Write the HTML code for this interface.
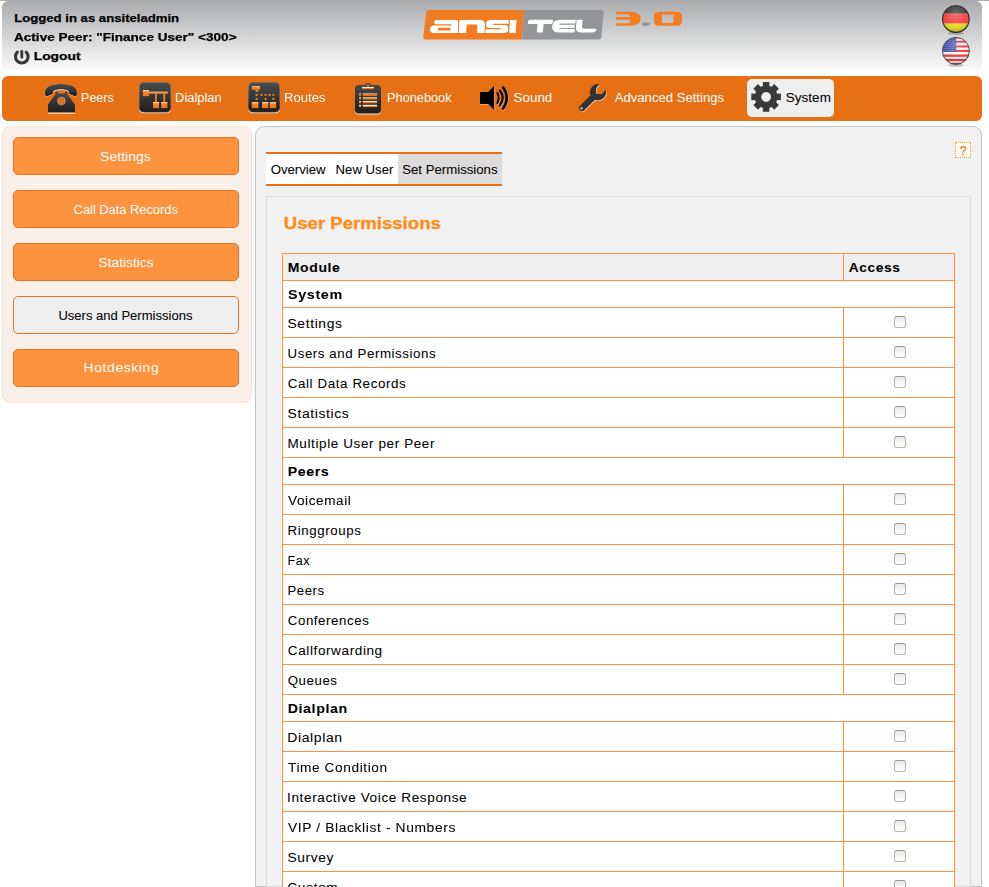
<!DOCTYPE html>
<html><head><meta charset="utf-8"><title>ansitel</title>
<style>
html,body{margin:0;padding:0;background:#fff;}
html{overflow:hidden;width:989px;height:887px;}
body{width:989px;height:887px;overflow:hidden;position:relative;font-family:"Liberation Sans",sans-serif;font-size:12.5px;color:#000;}
div,span,i,svg{position:absolute;box-sizing:border-box;display:block;}
span{white-space:nowrap;font-style:normal;}
.b{font-weight:bold;}
#topline{left:0;top:0;width:989px;height:1px;background:#a9aaac;}
#hdr{left:2px;top:0;width:980px;height:71px;border-radius:6px;background:linear-gradient(#a9aaac 0%,#fcfcfc 100%);clip-path:inset(1px 0 0 0 round 6px);}
#hdr span{font-weight:bold;font-size:11.5px;color:#000;line-height:14px;}
#nav{left:2px;top:76px;width:980px;height:45px;border-radius:6px;background:#e76f14;}
#nav span{color:#fff;font-size:12.5px;line-height:16px;top:14px;}
#sys{left:745px;top:3px;width:87px;height:38px;border-radius:5px;background:#eee;}
#side{left:2px;top:126px;width:250px;height:277px;border-radius:8px;background:#f9eee8;border:1px solid #f7e2d5;}
.sb{left:13px;width:226px;height:38px;border-radius:5px;border:1px solid #e9741f;background:#fd923f;}
.sb span{color:#fff;line-height:36px;top:1px;}
.sb.sel{background:#eeeeee;border-color:#e9741f;}
.sb.sel span{color:#000;}
#main{left:255px;top:126px;width:727px;height:761px;border-bottom:none;border:1px solid #c4c4c4;border-radius:9px 9px 0 0;background:#f1f1f1;}
#tabs{left:266px;top:152px;width:236px;height:34px;border-top:2px solid #e76f14;border-bottom:2px solid #e76f14;background:#fff;}
#tabs .sel{left:132px;top:0;width:104px;height:30px;background:#dddcdc;}
#tabs span{line-height:30px;top:1px;}
#help{left:955px;top:142px;width:16px;height:16px;border:1px dotted #ff9d00;background:#fcfcf6;}
#help span{color:#e5670e;font-size:13px;line-height:14px;left:3.5px;top:0.5px;}
#inner{left:266px;top:196px;width:705px;height:691px;border-bottom:none;border:1px solid #dadada;background:#f1f1f1;}
#title{left:284px;top:212.8px;font-size:16.5px;font-weight:bold;color:#ff8c17;line-height:20px;}
#tbl{left:282px;top:253px;width:673px;height:634px;overflow:hidden;border:1px solid #ff9140;border-bottom:none;background:#fff;}
.tr{left:0;width:671px;border-bottom:1px solid #ff9140;background:#fff;}
.tr.th{background:#eeeeee;}
.tr .t{left:5px;top:0;}
.tr .t{line-height:32px;}
.tr.th .t,.tr.hd .t{line-height:28px;}
.tr .acc{left:566px;}
.vd{left:560px;top:0;width:1px;height:100%;background:#ff9140;}
.cb{left:611px;top:8px;width:12px;height:12px;border:1px solid #b0b4ad;border-top-color:#8f9b8d;border-radius:3px;background:linear-gradient(#e9e9e9,#fff);}
.b,#hdr span{-webkit-text-stroke:0.25px #000;}
#title{-webkit-text-stroke:0.3px #ff8c17;}
span[id]{transform-origin:0 50%;}
.tr .t,#s5{letter-spacing:0.55px;}
.tr .t,#tabs span{-webkit-text-stroke:0.06px #000;}
.sb span,#nav span{-webkit-text-stroke:0;}
.sb.sel span,#nav #n7{-webkit-text-stroke:0.06px #000;}
.b,#hdr span{-webkit-text-stroke:0.25px #000;}
#b1{transform:translateX(-0.3px) scaleX(1.0537);}
#b2{transform:translateX(-0.4px) scaleX(1.0522);}
#b3{transform:translateX(-0.8px) scaleX(1.056);}
#h1{transform:translateX(0.2px) scaleX(1.1422);}
#h2{transform:translateX(0px) scaleX(1.18);}
#h3{transform:translateX(-0.3px) scaleX(1.2037);}
#n1{transform:translateX(0.1px) scaleX(0.9988);}
#n2{transform:translateX(0.1px) scaleX(1.0304);}
#n3{transform:translateX(0px) scaleX(1.0466);}
#n4{transform:translateX(0.1px) scaleX(1.0193);}
#n5{transform:translateX(-0.4px) scaleX(1.0701);}
#n6{transform:translateX(0.7px) scaleX(1.049);}
#n7{transform:translateX(-0.2px) scaleX(1.0821);}
#s1{transform:translateX(-0.9px) scaleX(1.1245);}
#s2{transform:translateX(-0.4px) scaleX(1.0278);}
#s3{transform:translateX(-0.5px) scaleX(1.101);}
#s4{transform:translateX(-0.6px) scaleX(1.0428);}
#s5{transform:translateX(-0.4px) scaleX(1.1116);}
#t_0{transform:translateX(0px) scaleX(1.1474);}
#t_1{transform:translateX(-0.5px) scaleX(1.1109);}
#t_10{transform:translateX(-0.5px) scaleX(1.05);}
#t_11{transform:translateX(-0.2px) scaleX(1.0601);}
#t_12{transform:translateX(-0.2px) scaleX(1.0839);}
#t_13{transform:translateX(-0.3px) scaleX(1.0583);}
#t_14{transform:translateX(-0.3px) scaleX(1.1324);}
#t_15{transform:translateX(-0.8px) scaleX(1.1193);}
#t_16{transform:translateX(0px) scaleX(1.0921);}
#t_17{transform:translateX(-0.9px) scaleX(1.0867);}
#t_18{transform:translateX(0px) scaleX(1.1068);}
#t_19{transform:translateX(-0.5px) scaleX(1.1022);}
#t_2{transform:translateX(-0.5px) scaleX(1.0618);}
#t_20{transform:translateX(-0.7px) scaleX(1.1025);}
#t_3{transform:translateX(-0.2px) scaleX(1.0695);}
#t_4{transform:translateX(-0.5px) scaleX(1.1154);}
#t_5{transform:translateX(-0.5px) scaleX(1.0815);}
#t_6{transform:translateX(-0.3px) scaleX(1.1297);}
#t_7{transform:translateX(0px) scaleX(1.0856);}
#t_8{transform:translateX(-0.5px) scaleX(1.0648);}
#t_9{transform:translateX(-0.4px) scaleX(1.0043);}
#t_Access{transform:translateX(-0.2px) scaleX(1.0966);}
#t_Module{transform:translateX(-0.2px) scaleX(1.1202);}
#title{transform:translateX(-0.2px) scaleX(1.1264);}

</style></head>
<body>
<div id="topline"></div>
<div id="hdr">
<span id="h1" style="left:12px;top:11px">Logged in as ansiteladmin</span>
<span id="h2" style="left:12px;top:30px">Active Peer: "Finance User" &lt;300&gt;</span>
<svg style="left:11px;top:48px" width="19" height="19" viewBox="13 48 19 19"><path d="M17.400,52.200 A6.300,6.300 0 1 0 26.200,52.200" fill="none" stroke="#383838" stroke-width="3.100" stroke-linecap="round"/><path d="M21.800,51.300 V57.300" stroke="#383838" stroke-width="2.800" stroke-linecap="round"/></svg>
<span id="h3" style="left:32px;top:49px">Logout</span>
<svg id="logo" style="left:418px;top:8px" width="270" height="38" viewBox="420 8 270 38">
<path d="M428.400,10 H524 L522.200,39.600 H425.300 Q423.100,39.600 423.300,37.600 L426.200,12 Q426.400,10 428.400,10 Z" fill="#f17c21"/>
<path d="M524,10 H601.500 Q603.800,10 603.600,12.200 L601.300,37.600 Q601.100,39.600 599,39.600 H522.200 Z" fill="#939598"/>
<g transform="translate(1.700,0) skewX(-3.500) translate(0,20.100) scale(1,1.0756) translate(0,-20.300)" fill="#fff">
<rect x="433.800" y="20.300" width="24" height="3.900" rx="1.900"/>
<path d="M451,20.300 H454 Q458,20.300 458,24 V32.200 H451 Z"/>
<path d="M434,25.300 H458 V32.200 H434 Q430.100,32.200 430.100,28.700 Q430.100,25.300 434,25.300 Z M439,27.500 Q437.800,27.500 437.800,28.700 Q437.800,29.900 439,29.900 H450.500 V27.500 Z" fill-rule="evenodd"/>
<path d="M459,32.200 V20.300 H479.500 Q484.800,20.300 484.800,25 V32.200 H477.300 V25.600 Q477.300,24.300 475.800,24.300 H466.500 V32.200 Z"/>
<path d="M489.500,20.300 H508.400 V23.700 H493.800 Q493,23.700 493,24.300 Q493,24.900 493.800,24.900 H504.500 Q508.400,24.900 508.400,28.500 Q508.400,32.200 504.500,32.200 H485.700 V28.800 H500.300 Q501,28.800 501,28.200 Q501,27.700 500.300,27.700 H489.500 Q485.700,27.700 485.700,24 Q485.700,20.300 489.500,20.300 Z"/>
<rect x="509.500" y="20.300" width="6.600" height="11.900"/>
</g>
<g transform="translate(2.400,0) skewX(-5) translate(0,19.800) scale(1,1.0407) translate(0,-19.800)" fill="#fff">
<path d="M529,19.800 H552 Q552.700,19.800 552.500,20.800 L552,22.900 Q551.800,23.900 550.800,23.900 H543.300 V32.100 H537.200 V23.900 H528.200 Q527.200,23.900 527.400,22.900 L527.800,20.800 Q528,19.800 529,19.800 Z"/>
<path d="M560,19.800 H575 V23.300 H561.500 Q559.300,23.300 559,24.500 H574.500 V27.600 H559 Q559.300,28.700 561.500,28.700 H575 V32.100 H560 Q552,32.100 552,26 Q552,19.800 560,19.800 Z"/>
<path d="M576,19.800 H582 V26.500 Q582,28.300 584.500,28.300 H595 Q597.500,28.300 596.500,30.200 Q595.500,32.100 593,32.100 H582 Q576,32.100 576,27 Z"/>
</g>
<g fill="#f57d20">
<path d="M616.800,11.800 H629 Q640.800,11.800 640.800,18.800 Q640.800,25.800 629,25.800 H616.800 Q615.600,25.800 615.600,24.500 Q615.600,23.200 616.800,23.200 H628 Q630,23.200 630.300,19.800 H617 Q615.800,19.800 615.800,18.350 Q615.800,16.900 617,16.900 H630.300 Q630,14.200 628,14.200 H616.800 Q615.600,14.200 615.600,13 Q615.600,11.800 616.800,11.800 Z"/>
<path d="M659,11.800 H677 Q682,11.800 682,16.800 V20.800 Q682,25.800 677,25.800 H659 Q654,25.800 654,20.800 V16.800 Q654,11.800 659,11.800 Z M662,14.600 V23 H673.400 V14.600 Z" fill-rule="evenodd"/>
</g>
<ellipse cx="645.800" cy="24" rx="4" ry="1.800" fill="#909294"/>
</svg>
<svg style="left:936px;top:0" width="40" height="72" viewBox="938 0 40 72">
<defs>
<clipPath id="c1"><circle cx="955.900" cy="19.100" r="13.300"/></clipPath>
<clipPath id="c2"><circle cx="955.900" cy="50.900" r="13.500"/></clipPath>
<radialGradient id="sh" cx="0.5" cy="0.3" r="0.7"><stop offset="0" stop-color="#fff" stop-opacity="0.28"/><stop offset="0.65" stop-color="#fff" stop-opacity="0.05"/><stop offset="1" stop-color="#000" stop-opacity="0.28"/></radialGradient>
</defs>
<ellipse cx="955.900" cy="33.200" rx="8" ry="1.500" fill="#000" fill-opacity="0.25"/>
<ellipse cx="955.900" cy="65.200" rx="8" ry="1.500" fill="#000" fill-opacity="0.25"/>
<g clip-path="url(#c1)"><rect x="940" y="4" width="32" height="9.700" fill="#333"/><rect x="940" y="13.600" width="32" height="10" fill="#f23c3c"/><rect x="940" y="23.500" width="32" height="10" fill="#e2da1c"/></g>
<circle cx="955.900" cy="19.100" r="13.300" fill="url(#sh)" stroke="#2a2a2a" stroke-width="1.100"/>
<g clip-path="url(#c2)"><rect x="940" y="36" width="32" height="30" fill="#f1f3f3"/>
<g fill="#ee3030"><rect x="940" y="36.600" width="32" height="2"/><rect x="940" y="40.700" width="32" height="2.100"/><rect x="940" y="45.400" width="32" height="2.100"/><rect x="940" y="49.900" width="32" height="2.100"/><rect x="940" y="54.500" width="32" height="2.300"/><rect x="940" y="58.900" width="32" height="2.100"/><rect x="940" y="63" width="32" height="2"/></g>
<rect x="940" y="36" width="16.300" height="16" fill="#3b4aa3"/>
<g fill="#c3c9ea"><circle cx="943.5" cy="38.6" r="0.42"/><circle cx="945.7" cy="38.6" r="0.42"/><circle cx="947.9" cy="38.6" r="0.42"/><circle cx="950.1" cy="38.6" r="0.42"/><circle cx="952.3" cy="38.6" r="0.42"/><circle cx="954.5" cy="38.6" r="0.42"/><circle cx="944.6" cy="40.6" r="0.42"/><circle cx="946.8" cy="40.6" r="0.42"/><circle cx="949.0" cy="40.6" r="0.42"/><circle cx="951.2" cy="40.6" r="0.42"/><circle cx="953.4" cy="40.6" r="0.42"/><circle cx="955.6" cy="40.6" r="0.42"/><circle cx="943.5" cy="42.6" r="0.42"/><circle cx="945.7" cy="42.6" r="0.42"/><circle cx="947.9" cy="42.6" r="0.42"/><circle cx="950.1" cy="42.6" r="0.42"/><circle cx="952.3" cy="42.6" r="0.42"/><circle cx="954.5" cy="42.6" r="0.42"/><circle cx="944.6" cy="44.6" r="0.42"/><circle cx="946.8" cy="44.6" r="0.42"/><circle cx="949.0" cy="44.6" r="0.42"/><circle cx="951.2" cy="44.6" r="0.42"/><circle cx="953.4" cy="44.6" r="0.42"/><circle cx="955.6" cy="44.6" r="0.42"/><circle cx="943.5" cy="46.6" r="0.42"/><circle cx="945.7" cy="46.6" r="0.42"/><circle cx="947.9" cy="46.6" r="0.42"/><circle cx="950.1" cy="46.6" r="0.42"/><circle cx="952.3" cy="46.6" r="0.42"/><circle cx="954.5" cy="46.6" r="0.42"/><circle cx="944.6" cy="48.6" r="0.42"/><circle cx="946.8" cy="48.6" r="0.42"/><circle cx="949.0" cy="48.6" r="0.42"/><circle cx="951.2" cy="48.6" r="0.42"/><circle cx="953.4" cy="48.6" r="0.42"/><circle cx="955.6" cy="48.6" r="0.42"/><circle cx="943.5" cy="50.6" r="0.42"/><circle cx="945.7" cy="50.6" r="0.42"/><circle cx="947.9" cy="50.6" r="0.42"/><circle cx="950.1" cy="50.6" r="0.42"/><circle cx="952.3" cy="50.6" r="0.42"/><circle cx="954.5" cy="50.6" r="0.42"/></g></g>
<circle cx="955.900" cy="50.900" r="13.500" fill="url(#sh)" stroke="#555" stroke-width="1"/>
</svg>
</div>
<div id="nav">
<div id="sys"></div>
<!--NI0-->
<svg width="0" height="0"><defs>
<linearGradient id="dk" x1="0" y1="0" x2="0" y2="1"><stop offset="0" stop-color="#4c4c4c"/><stop offset="1" stop-color="#1e1e1e"/></linearGradient>
<linearGradient id="og" x1="0" y1="0" x2="0" y2="1"><stop offset="0" stop-color="#fff0e0"/><stop offset="0.3" stop-color="#f58526"/><stop offset="1" stop-color="#ef7512"/></linearGradient>
<linearGradient id="ol" x1="0" y1="0" x2="0" y2="1"><stop offset="0" stop-color="#fff3e6"/><stop offset="0.38" stop-color="#ffe2c6"/><stop offset="0.42" stop-color="#f27a18"/><stop offset="1" stop-color="#f27a18"/></linearGradient>
<linearGradient id="rim" x1="0" y1="0" x2="0" y2="1"><stop offset="0" stop-color="#6a6a6a"/><stop offset="1" stop-color="#2a2a2a"/></linearGradient>
</defs></svg>
<svg style="left:42px;top:6px" width="35" height="33" viewBox="0 0 35 33">
<path d="M4,31.2 H31" stroke="#fff" stroke-opacity="0.85" stroke-width="1.2"/>
<path d="M1.2,14 C0,7 4,2.2 17,2 C30,2.2 34,7 32.800,14 L31.500,15 L25.200,12.600 C25.500,9.800 24,8.300 17,8.200 C10,8.300 8.500,9.800 8.800,12.600 L2.500,15 Z" fill="#fff" fill-opacity="0.8"/>
<path d="M1.2,13.3 C0,6.500 4,2.2 17,2 C30,2.2 34,6.500 32.800,13.300 L31.500,14.400 L25.200,11.900 C25.500,9.200 24,7.400 17,7.300 C10,7.400 8.500,9.200 8.800,11.900 L2.500,14.400 Z" fill="url(#dk)"/>
<path d="M11.4,9.400 h2.400 v2 h7.200 v-2 h2.400 v3.200 L31,22.500 V30.300 H4 V22.500 L11.400,12.600 Z M17.400,15.400 a3.600,3.600 0 1 0 0.010,0 Z" fill="url(#dk)" fill-rule="evenodd"/>
<circle cx="17.400" cy="19" r="3.900" fill="none" stroke="#fff" stroke-opacity="0.55" stroke-width="0.8"/>
</svg>
<svg style="left:137px;top:6px" width="32" height="32" viewBox="0 0 32 32">
<rect x="0" y="0.800" width="32" height="30.400" rx="4.500" fill="#fff" fill-opacity="0.85"/>
<rect x="0.400" y="0.400" width="31.200" height="29.600" rx="4.200" fill="url(#dk)" stroke="url(#rim)" stroke-width="0.800"/>
<g fill="url(#og)"><rect x="3.900" y="8.100" width="6.100" height="6.100"/><rect x="14" y="20" width="6.100" height="6.100"/><rect x="22.100" y="20" width="6.300" height="6.100"/></g>
<g fill="#f27a18"><rect x="10" y="10.200" width="18.900" height="1.600"/><rect x="16" y="11.700" width="1.800" height="8.600"/><rect x="24.300" y="11.700" width="1.900" height="8.600"/></g>
<rect x="10" y="9.700" width="18.900" height="0.700" fill="#ffe9d6"/>
</svg>
<svg style="left:246px;top:6px" width="32" height="32" viewBox="0 0 32 32">
<rect x="0.200" y="0.900" width="31.800" height="30.300" rx="4.500" fill="#fff" fill-opacity="0.85"/>
<rect x="0.600" y="0.500" width="31" height="29.500" rx="4.200" fill="url(#dk)" stroke="url(#rim)" stroke-width="0.800"/>
<g fill="url(#og)"><rect x="3.800" y="4.200" width="8.200" height="3.600"/><rect x="3.800" y="20.100" width="6.600" height="6"/><rect x="14" y="20.100" width="6.400" height="6"/><rect x="21.800" y="20.100" width="6.300" height="6"/></g>
<g fill="#f58220"><rect x="7.600" y="7.800" width="2.600" height="1.900"/>
<rect x="7.600" y="11.900" width="2.200" height="1.900"/><rect x="12.500" y="11.900" width="2" height="1.900"/><rect x="16.600" y="11.900" width="2" height="1.900"/><rect x="20.700" y="11.900" width="2" height="1.900"/><rect x="24.400" y="11.900" width="2" height="1.900"/>
<rect x="7.600" y="16" width="2.200" height="1.900"/><rect x="16.600" y="16" width="2" height="1.900"/><rect x="24.400" y="16" width="2" height="1.900"/></g>
</svg>
<svg style="left:352px;top:6px" width="28" height="33" viewBox="0 0 28 33">
<rect x="0.900" y="3.700" width="26.100" height="28.700" rx="4" fill="#fff" fill-opacity="0.85"/>
<path d="M4.900,2.900 H10.700 Q11.200,1 14,1 Q16.800,1 17.300,2.900 H23 Q27,2.900 27,6.900 V27.600 Q27,31.600 23,31.600 H4.900 Q0.900,31.600 0.900,27.600 V6.900 Q0.900,2.900 4.900,2.900 Z" fill="url(#dk)"/>
<g fill="url(#ol)"><rect x="8.100" y="4.900" width="11.700" height="2.200"/>
<rect x="5.100" y="11.500" width="1.900" height="2.300"/><rect x="8.700" y="11.500" width="14.400" height="2.300"/>
<rect x="5.100" y="15.300" width="1.900" height="2.300"/><rect x="8.700" y="15.300" width="14.400" height="2.300"/>
<rect x="5.100" y="19" width="1.900" height="2.300"/><rect x="8.700" y="19" width="14.400" height="2.300"/>
<rect x="5.100" y="22.800" width="1.900" height="2.300"/><rect x="8.700" y="22.800" width="14.400" height="2.300"/></g>
<circle cx="14" cy="3.300" r="1" fill="#f58220"/>
</svg>
<svg style="left:476px;top:6px" width="32" height="32" viewBox="0 0 32 32">
<g transform="translate(0.500,0.700)" stroke="#ffd2aa" stroke-opacity="0.75" fill="none" stroke-linecap="round"><path d="M2,10 H10.200 L16,4 V28 L10.200,22 H2 Z" fill="#ffd2aa" fill-opacity="0.75" stroke="none"/><path d="M19.4,10.9 A11.0,11.0 0 0 1 19.4,21.1" stroke-width="2"/><path d="M22.0,8.7 A11.2,11.2 0 0 1 22.0,23.3" stroke-width="2.300"/><path d="M25.1,5.5 A17.1,17.1 0 0 1 25.1,26.5" stroke-width="2.700"/></g>
<g stroke="#000" fill="none" stroke-linecap="round"><path d="M2,10 H10.200 L16,4 V28 L10.200,22 H2 Z" fill="#000" stroke="none"/><path d="M19.4,10.9 A11.0,11.0 0 0 1 19.4,21.1" stroke-width="2"/><path d="M22.0,8.7 A11.2,11.2 0 0 1 22.0,23.3" stroke-width="2.300"/><path d="M25.1,5.5 A17.1,17.1 0 0 1 25.1,26.5" stroke-width="2.700"/></g>
</svg>
<svg style="left:572px;top:4px" width="40" height="40" viewBox="574 80 40 40">
<defs><mask id="wm" maskUnits="userSpaceOnUse" x="574" y="80" width="40" height="40"><rect x="574" y="80" width="40" height="40" fill="#fff"/><path d="M596,88.800 L596,93.300 Q596,94 596.700,94 L602,94 L607,88 L609,82 L600.500,82.500 Z" fill="#000"/><circle cx="581.600" cy="108.600" r="1.300" fill="#000"/></mask></defs>
<g mask="url(#wm)" transform="translate(0.500,0.700)" opacity="0.75"><path d="M582,108.300 L595,95.300" stroke="#fff" stroke-width="6.200" stroke-linecap="round"/><circle cx="598" cy="92.300" r="8.200" fill="#fff"/></g>
<g mask="url(#wm)"><path d="M582,108.300 L595,95.300" stroke="#343434" stroke-width="6.200" stroke-linecap="round"/><circle cx="598" cy="92.300" r="8.200" fill="#343434"/></g>
</svg>
<svg style="left:748px;top:5px" width="33" height="33" viewBox="0 0 33 33">
<path d="M12.9,4.9 L12.8,1.1 L19.4,1.1 L19.3,4.9 L21.6,5.8 L24.2,3.1 L28.9,7.8 L26.2,10.4 L27.1,12.7 L30.9,12.6 L30.9,19.2 L27.1,19.1 L26.2,21.4 L28.9,24.0 L24.2,28.7 L21.6,26.0 L19.3,26.9 L19.4,30.7 L12.8,30.7 L12.9,26.9 L10.6,26.0 L8.0,28.7 L3.3,24.0 L6.0,21.4 L5.1,19.1 L1.3,19.2 L1.3,12.6 L5.1,12.7 L6.0,10.4 L3.3,7.8 L8.0,3.1 L10.6,5.8 Z M16.100,11 a4.900,4.900 0 1 0 0.010,0 Z" fill="#3a3a3a" fill-rule="evenodd"/>
</svg>
<!--NI1-->
<span id="n1" style="left:79px">Peers</span>
<span id="n2" style="left:173px">Dialplan</span>
<span id="n3" style="left:282px">Routes</span>
<span id="n4" style="left:385px">Phonebook</span>
<span id="n5" style="left:512px">Sound</span>
<span id="n6" style="left:612px">Advanced Settings</span>
<span id="n7" style="left:784px;color:#000">System</span>
</div>
<div id="side">
<div class="sb" style="top:10px;left:10px"><span id="s1" style="left:87px">Settings</span></div>
<div class="sb" style="top:63px;left:10px"><span id="s2" style="left:60px">Call Data Records</span></div>
<div class="sb" style="top:116px;left:10px"><span id="s3" style="left:85px">Statistics</span></div>
<div class="sb sel" style="top:169px;left:10px"><span id="s4" style="left:45px">Users and Permissions</span></div>
<div class="sb" style="top:222px;left:10px"><span id="s5" style="left:70px;top:0">Hotdesking</span></div>
</div>
<div id="main"></div>
<div id="tabs"><div class="sel"></div>
<span id="b1" style="left:5px">Overview</span>
<span id="b2" style="left:70px">New User</span>
<span id="b3" style="left:137px">Set Permissions</span>
</div>
<div id="help"><span>?</span></div>
<div id="inner"></div>
<span id="title">User Permissions</span>
<div id="tbl">
<div class="tr th" style="top:0;height:27px"><span class="t b" id="t_Module">Module</span><span class="t b acc" id="t_Access">Access</span><i class="vd"></i></div>
<div class="tr hd" style="top:27px;height:27px"><span class="t b" id="t_0">System</span></div>
<div class="tr" style="top:54px;height:30px"><span class="t" id="t_1">Settings</span><i class="vd"></i><i class="cb"></i></div>
<div class="tr" style="top:84px;height:30px"><span class="t" id="t_2">Users and Permissions</span><i class="vd"></i><i class="cb"></i></div>
<div class="tr" style="top:114px;height:30px"><span class="t" id="t_3">Call Data Records</span><i class="vd"></i><i class="cb"></i></div>
<div class="tr" style="top:144px;height:30px"><span class="t" id="t_4">Statistics</span><i class="vd"></i><i class="cb"></i></div>
<div class="tr" style="top:174px;height:30px"><span class="t" id="t_5">Multiple User per Peer</span><i class="vd"></i><i class="cb"></i></div>
<div class="tr hd" style="top:204px;height:27px"><span class="t b" id="t_6">Peers</span></div>
<div class="tr" style="top:231px;height:30px"><span class="t" id="t_7">Voicemail</span><i class="vd"></i><i class="cb"></i></div>
<div class="tr" style="top:261px;height:30px"><span class="t" id="t_8">Ringgroups</span><i class="vd"></i><i class="cb"></i></div>
<div class="tr" style="top:291px;height:30px"><span class="t" id="t_9">Fax</span><i class="vd"></i><i class="cb"></i></div>
<div class="tr" style="top:321px;height:30px"><span class="t" id="t_10">Peers</span><i class="vd"></i><i class="cb"></i></div>
<div class="tr" style="top:351px;height:30px"><span class="t" id="t_11">Conferences</span><i class="vd"></i><i class="cb"></i></div>
<div class="tr" style="top:381px;height:30px"><span class="t" id="t_12">Callforwarding</span><i class="vd"></i><i class="cb"></i></div>
<div class="tr" style="top:411px;height:30px"><span class="t" id="t_13">Queues</span><i class="vd"></i><i class="cb"></i></div>
<div class="tr hd" style="top:441px;height:27px"><span class="t b" id="t_14">Dialplan</span></div>
<div class="tr" style="top:468px;height:30px"><span class="t" id="t_15">Dialplan</span><i class="vd"></i><i class="cb"></i></div>
<div class="tr" style="top:498px;height:30px"><span class="t" id="t_16">Time Condition</span><i class="vd"></i><i class="cb"></i></div>
<div class="tr" style="top:528px;height:30px"><span class="t" id="t_17">Interactive Voice Response</span><i class="vd"></i><i class="cb"></i></div>
<div class="tr" style="top:558px;height:30px"><span class="t" id="t_18">VIP / Blacklist - Numbers</span><i class="vd"></i><i class="cb"></i></div>
<div class="tr" style="top:588px;height:30px"><span class="t" id="t_19">Survey</span><i class="vd"></i><i class="cb"></i></div>
<div class="tr" style="top:618px;height:30px"><span class="t" id="t_20">Custom</span><i class="vd"></i><i class="cb"></i></div>
</div>
</body></html>
